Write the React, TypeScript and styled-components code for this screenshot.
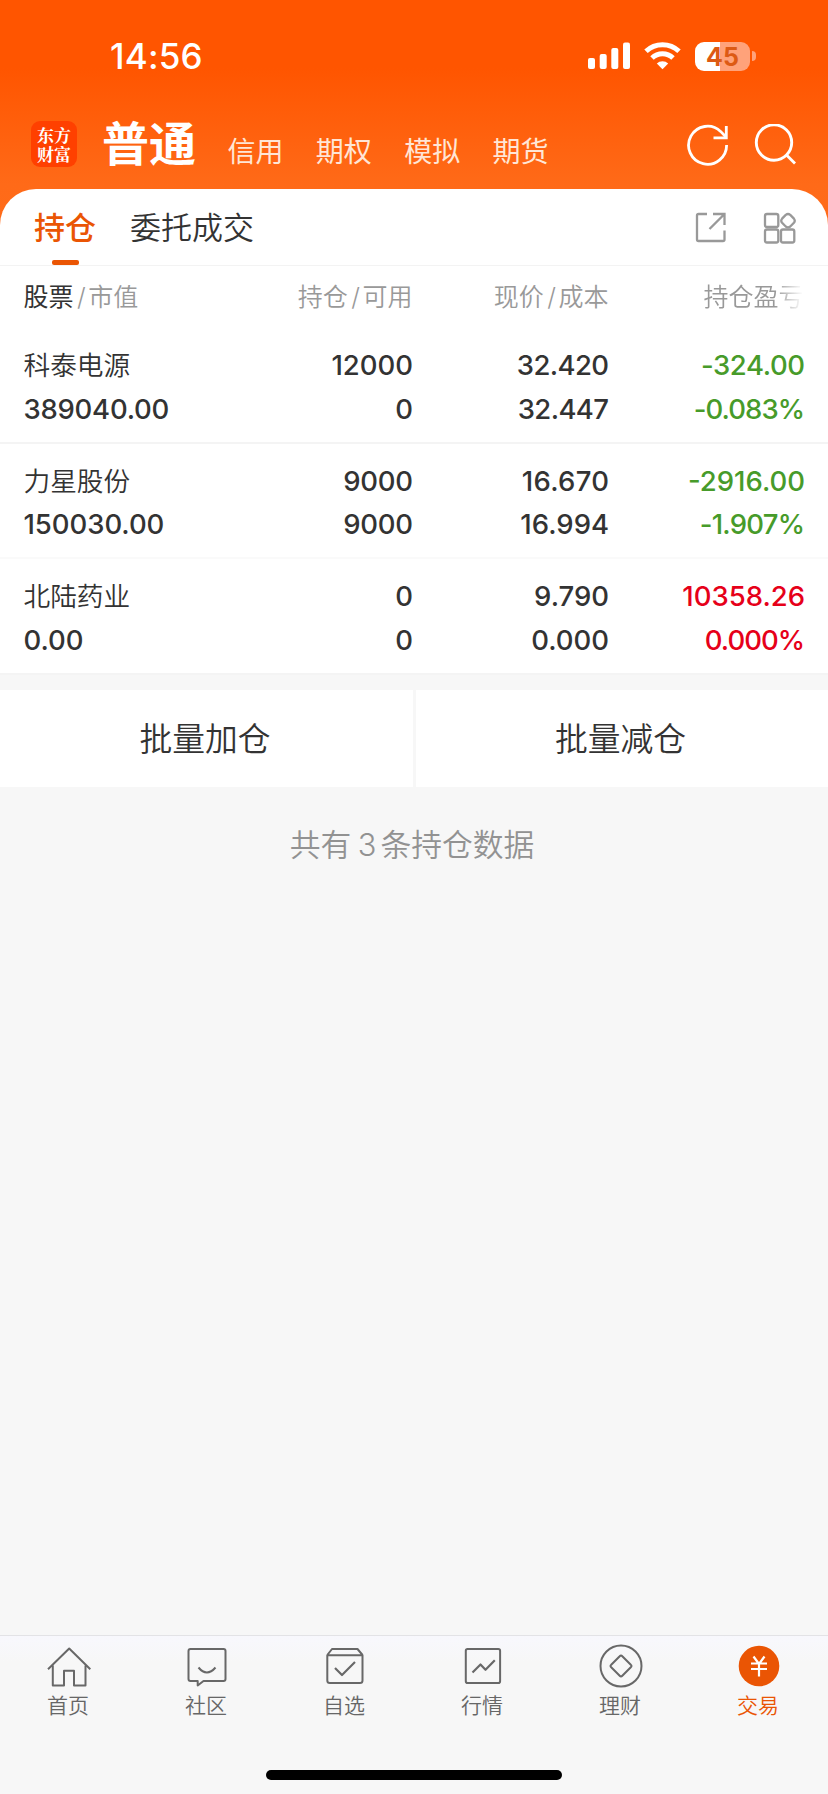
import React from "react";
import styled, { createGlobalStyle, css } from "styled-components";

const ORANGE = "#ea5504";
const INK = "#333333";
const MUTED = "#999999";
const GREEN = "#479b2a";
const RED = "#e60019";

const GlobalStyle = createGlobalStyle`
  * { box-sizing: border-box; }
  body {
    margin: 0;
    background: #f7f7f7;
    font-family: Inter, "Noto Sans CJK SC", sans-serif;
    color: ${INK};
  }
`;

const Screen = styled.div`
  width: 828px;
  height: 1794px;
  display: flex;
  flex-direction: column;
  overflow: hidden;
  background: linear-gradient(#ff5500 0, #ff5500 68px, #ff6a18 184px, #ff6c1a 240px, #f7f7f7 240px);
`;

const StatusBar = styled.div`
  height: 112px;
  padding: 0 72px 0 110px;
  display: flex;
  align-items: center;
  justify-content: space-between;
  color: #fff;
`;

const Clock = styled.span`
  font-size: 35px;
  font-weight: 550;
  letter-spacing: 0.2px;
  line-height: 40px;
`;

const StatusIcons = styled.div`
  display: flex;
  align-items: center;
  gap: 14px;
`;

const Battery = styled.div`
  display: flex;
  align-items: center;
  gap: 2px;
`;

const BatteryBody = styled.div`
  width: 55px;
  height: 29px;
  border-radius: 9px;
  background: linear-gradient(90deg, #fff 45%, #ffa27a 45%);
  color: #dd5a14;
  font-size: 25px;
  font-weight: 700;
  line-height: 30px;
  text-align: center;
`;

const BatteryTip = styled.div`
  width: 4px;
  height: 10px;
  border-radius: 0 4px 4px 0;
  background: #ffa27a;
`;

const Header = styled.header`
  height: 77px;
  padding: 0 32px 0 31px;
  display: flex;
  align-items: flex-start;
`;

const Logo = styled.div`
  width: 46px;
  height: 46px;
  margin-top: 9px;
  border-radius: 9px;
  background: #ff4000;
  color: #fff;
  font-family: "Noto Serif CJK SC", "Noto Sans CJK SC", serif;
  font-size: 17px;
  font-weight: 700;
  line-height: 19px;
  padding-top: 4px;
  text-align: center;
`;

const AccountTitle = styled.h1`
  margin: 0 0 0 25px;
  width: 94px;
  font-size: 47px;
  font-weight: 700;
  line-height: 64px;
  color: #fff;
  white-space: nowrap;
`;

const AccountTabs = styled.nav`
  display: flex;
  gap: 32.3px;
  margin: 20px 0 0 31.5px;
  font-size: 28px;
  line-height: 40px;
  color: #ffe6d6;
`;

const HeaderActions = styled.div`
  display: flex;
  gap: 25px;
  margin: 12px 0 0 auto;
  svg { display: block; }
`;

const Card = styled.main`
  background: #fff;
  border-radius: 36px 36px 0 0;
`;

const CardTabs = styled.div`
  height: 77px;
  padding: 0 32px 0 34px;
  display: flex;
  border-bottom: 1px solid #f3f3f3;
`;

const CardTab = styled.div<{ $active?: boolean }>`
  display: flex;
  flex-direction: column;
  align-items: center;
  margin-right: 34px;
  font-size: 31px;
  font-weight: 350;
  line-height: 44px;
  padding-top: 17px;
  ${(p) => p.$active && css`
    color: ${ORANGE};
    font-weight: 500;
    &::after {
      content: "";
      width: 27px;
      height: 6px;
      margin-top: 10px;
      border-radius: 2px;
      background: ${ORANGE};
    }
  `}
`;

const CardActions = styled.div`
  display: flex;
  gap: 37px;
  margin: 23px 0 0 auto;
  svg { display: block; }
`;

const columns = css`
  display: grid;
  grid-template-columns: 216.500px 172.500px 196px 196px;
  padding: 0 23.500px;
`;

const TableHead = styled.div`
  ${columns}
  height: 62px;
  font-size: 25px;
  font-weight: 350;
  line-height: 62px;
  color: ${MUTED};
`;

const HeadCell = styled.div`
  text-align: right;
  white-space: nowrap;
  &:first-child { text-align: left; }
  b { font-weight: 400; color: ${INK}; }
  i { font-style: normal; padding: 0 2.500px 0 3.500px; }
`;

const FadingCell = styled(HeadCell)`
  padding-left: 95px;
  text-align: left;
  overflow: hidden;
  mask-image: linear-gradient(90deg, #000 166px, transparent 194px);
`;

const Row = styled.div<{ $faint?: boolean }>`
  ${columns}
  height: 115.6px;
  padding-top: 16px;
  border-bottom: 2px solid ${(p) => (p.$faint ? "#fafafa" : "#f4f4f4")};
`;

const Cell = styled.div<{ $color?: string }>`
  display: flex;
  flex-direction: column;
  align-items: flex-end;
  font-size: 27.5px;
  font-weight: 540;
  line-height: 43.7px;
  color: ${(p) => p.$color ?? INK};
  &:first-child { align-items: flex-start; }
`;

const StockName = styled.span`
  font-size: 26.7px;
  font-weight: 350;
`;

const Figure = styled.span<{ $tracking?: number }>`
  letter-spacing: ${(p) => p.$tracking ?? 0}px;
  margin-right: ${(p) => -(p.$tracking ?? 0) - 0.5}px;
`;

const BatchActions = styled.div`
  display: grid;
  grid-template-columns: 413px 412px;
  gap: 3px;
  margin-top: 15px;
  background: #f7f7f7;
`;

const BatchButton = styled.button`
  height: 97px;
  border: 0;
  padding: 1px 3px 0 0;
  background: #fff;
  color: ${INK};
  font: 350 32.8px/48px Inter, "Noto Sans CJK SC", sans-serif;
`;

const Body = styled.section`
  flex: 1;
  background: #f7f7f7;
`;

const Summary = styled.p`
  margin: 34px 0 0;
  padding-right: 4px;
  text-align: center;
  font-size: 30.8px;
  font-weight: 350;
  line-height: 48px;
  color: #929292;
  span { padding: 0 4px 0 6.500px; }
`;

const TabBar = styled.footer`
  height: 159px;
  border-top: 1px solid #e3e3e6;
  background: linear-gradient(#f8f8fd, #f7f7f7 26px);
  display: flex;
  flex-direction: column;
  align-items: center;
`;

const TabItems = styled.div`
  width: 100%;
  height: 134px;
  display: grid;
  grid-template-columns: repeat(6, 138px);
`;

const TabItem = styled.div<{ $active?: boolean }>`
  display: flex;
  flex-direction: column;
  align-items: center;
  padding-top: 8px;
  font-size: 21px;
  font-weight: 350;
  line-height: 30px;
  color: ${(p) => (p.$active ? ORANGE : "#666666")};
  svg { display: block; margin-bottom: 3px; }
  span { margin-right: 2px; }
`;

const HomeIndicator = styled.div`
  width: 296px;
  height: 10px;
  border-radius: 5px;
  background: #000;
`;

const SignalIcon = () => (
  <svg width="42" height="28" viewBox="0 0 42 28" fill="#fff">
    <rect x="0" y="16" width="7" height="11" rx="2" />
    <rect x="11.7" y="12" width="7" height="15" rx="2" />
    <rect x="23.3" y="6" width="7" height="21" rx="2" />
    <rect x="35" y="0.5" width="7" height="26.5" rx="2" />
  </svg>
);

const WifiIcon = () => (
  <svg width="37" height="28" viewBox="0 0 37 28" fill="none" stroke="#fff" strokeWidth="5">
    <path d="M2 9.2a24 24 0 0 1 33 0" />
    <path d="M8 16a15.2 15.2 0 0 1 21 0" />
    <path d="M12.8 21.6a8 8 0 0 1 11.4 0l-5.7 5.6z" fill="#fff" stroke="none" />
  </svg>
);

const RefreshIcon = () => (
  <svg width="42" height="42" viewBox="0 0 42 42" fill="none" stroke="#fff" strokeWidth="2.8">
    <path d="M39.6 21a19 19 0 1 1-6-13.6L38.500 12.500" />
    <path d="M39.3 2v11.8H26.5" />
  </svg>
);

const SearchIcon = () => (
  <svg width="42" height="42" viewBox="0 0 42 42" fill="none" stroke="#fff" strokeWidth="2.9">
    <circle cx="20" cy="18.5" r="17.7" />
    <path d="M32.5 31l8.5 8.5" />
  </svg>
);

const ShareIcon = () => (
  <svg width="31" height="32" viewBox="0 0 31 32" fill="none" stroke={MUTED} strokeWidth="2.3">
    <path d="M12 2H3.5Q2 2 2 3.5V27.5Q2 29 3.5 29H28Q29.500 29 29.500 27.500V18.500" />
    <path d="M18 2H29.500V13M29 2.500L14.500 17" />
  </svg>
);

const GridIcon = () => (
  <svg width="33" height="32" viewBox="0 0 33 32" fill="none" stroke={MUTED} strokeWidth="2.3">
    <rect x="2" y="2" width="13.300" height="13" rx="2" />
    <rect x="2" y="17.500" width="13.300" height="13" rx="2" />
    <rect x="18" y="17.500" width="13.300" height="13" rx="2" />
    <path d="M22.700 2.900Q25 1.200 27.300 2.900L30.900 6.600Q32.600 8.700 30.900 10.800L27.300 14.500Q25 16.200 22.700 14.500L19.100 10.800Q17.400 8.700 19.100 6.600z" />
  </svg>
);

const NavSvg = ({ children }: { children: React.ReactNode }) => (
  <svg width="44" height="44" viewBox="0 0 44 44" fill="none" stroke="#686868" strokeWidth="2" strokeLinejoin="round">
    {children}
  </svg>
);

const HomeIcon = () => (
  <NavSvg>
    <path d="M1 25.300L22.200 4.500 43.300 25.300M5.800 21.500V41.500H17V26.800H27V41.500H38.500V21.500" />
  </NavSvg>
);
const CommunityIcon = () => (
  <NavSvg>
    <path d="M5.500 5H38.500Q40.500 5 40.500 7V35Q40.500 37 38.500 37H18.500L12.700 41.500V37H5.500Q3.500 37 3.500 35V7Q3.500 5 5.500 5z" />
    <path d="M13.500 23.500q8.300 10 17 0" />
  </NavSvg>
);
const WatchlistIcon = () => (
  <NavSvg>
    <path d="M4.300 11L9 5H34.500L39.500 11M4.300 11.300H39.500V36.500Q39.500 39 37 39H6.800Q4.300 39 4.300 36.500z" />
    <path d="M12 24l7 7L32 18" strokeWidth="2.2" />
  </NavSvg>
);
const MarketIcon = () => (
  <NavSvg>
    <rect x="4.800" y="5" width="34.300" height="34" rx="1.800" />
    <path d="M11.500 28.500L19.500 20.500 24.500 25.800 33.800 16.300" strokeWidth="2.2" />
  </NavSvg>
);
const WealthIcon = () => (
  <NavSvg>
    <circle cx="22" cy="22" r="20.500" />
    <path d="M20.700 12.200Q22 10.800 23.300 12.200L31.800 20.700Q33.200 22 31.800 23.300L23.300 31.800Q22 33.200 20.700 31.800L12.200 23.300Q10.800 22 12.200 20.700z" />
  </NavSvg>
);
const TradeIcon = () => (
  <NavSvg>
    <circle cx="22" cy="22" r="20.300" fill={ORANGE} stroke="none" />
    <path d="M16.500 12.500L22 20 27.500 12.500M14 19.500H30M14 25H30M22 19.500V32.500" stroke="#fff" strokeWidth="2.2" />
  </NavSvg>
);

type Fig = [text: string, tracking?: number];

interface Position {
  name: string;
  value: Fig;
  pairs: [Fig, Fig][];
  color: string;
}

// Each pair is one column: upper figure, lower figure.
const positions: Position[] = [
  {
    name: "科泰电源",
    value: ["389040.00", -0.25],
    pairs: [
      [["12000"], ["0"]],
      [["32.420", -0.6], ["32.447", -0.6]],
      [["-324.00", -0.4], ["-0.083%", -0.95]],
    ],
    color: GREEN,
  },
  {
    name: "力星股份",
    value: ["150030.00", -0.05],
    pairs: [
      [["9000", -0.3], ["9000", -0.3]],
      [["16.670", 0.3], ["16.994"]],
      [["-2916.00"], ["-1.907%", -0.75]],
    ],
    color: GREEN,
  },
  {
    name: "北陆药业",
    value: ["0.00"],
    pairs: [
      [["0"], ["0"]],
      [["9.790"], ["0.000"]],
      [["10358.26"], ["0.000%", -1]],
    ],
    color: RED,
  },
];

const tabs = [
  { label: "首页", Icon: HomeIcon },
  { label: "社区", Icon: CommunityIcon },
  { label: "自选", Icon: WatchlistIcon },
  { label: "行情", Icon: MarketIcon },
  { label: "理财", Icon: WealthIcon },
  { label: "交易", Icon: TradeIcon, active: true },
];

export default function App() {
  return (
    <Screen>
      <GlobalStyle />
      <StatusBar>
        <Clock>14:56</Clock>
        <StatusIcons>
          <SignalIcon />
          <WifiIcon />
          <Battery>
            <BatteryBody>45</BatteryBody>
            <BatteryTip />
          </Battery>
        </StatusIcons>
      </StatusBar>
      <Header>
        <Logo>东方<br />财富</Logo>
        <AccountTitle>普通</AccountTitle>
        <AccountTabs>
          {["信用", "期权", "模拟", "期货"].map((t) => <span key={t}>{t}</span>)}
        </AccountTabs>
        <HeaderActions>
          <RefreshIcon />
          <SearchIcon />
        </HeaderActions>
      </Header>
      <Card>
        <CardTabs>
          <CardTab $active>持仓</CardTab>
          <CardTab>委托成交</CardTab>
          <CardActions>
            <ShareIcon />
            <GridIcon />
          </CardActions>
        </CardTabs>
        <TableHead>
          <HeadCell><b>股票</b><i>/</i>市值</HeadCell>
          <HeadCell>持仓<i>/</i>可用</HeadCell>
          <HeadCell>现价<i>/</i>成本</HeadCell>
          <FadingCell>持仓盈亏</FadingCell>
        </TableHead>
        {positions.map((p, i) => (
          <Row key={p.name} $faint={i === 1}>
            <Cell>
              <StockName>{p.name}</StockName>
              <Figure $tracking={p.value[1]}>{p.value[0]}</Figure>
            </Cell>
            {p.pairs.map(([top, bottom], c) => (
              <Cell key={c} $color={c === 2 ? p.color : undefined}>
                <Figure $tracking={top[1]}>{top[0]}</Figure>
                <Figure $tracking={bottom[1]}>{bottom[0]}</Figure>
              </Cell>
            ))}
          </Row>
        ))}
      </Card>
      <Body>
        <BatchActions>
          <BatchButton>批量加仓</BatchButton>
          <BatchButton>批量减仓</BatchButton>
        </BatchActions>
        <Summary>共有<span>3</span>条持仓数据</Summary>
      </Body>
      <TabBar>
        <TabItems>
          {tabs.map(({ label, Icon, active }) => (
            <TabItem key={label} $active={active}>
              <Icon />
              <span>{label}</span>
            </TabItem>
          ))}
        </TabItems>
        <HomeIndicator />
      </TabBar>
    </Screen>
  );
}
